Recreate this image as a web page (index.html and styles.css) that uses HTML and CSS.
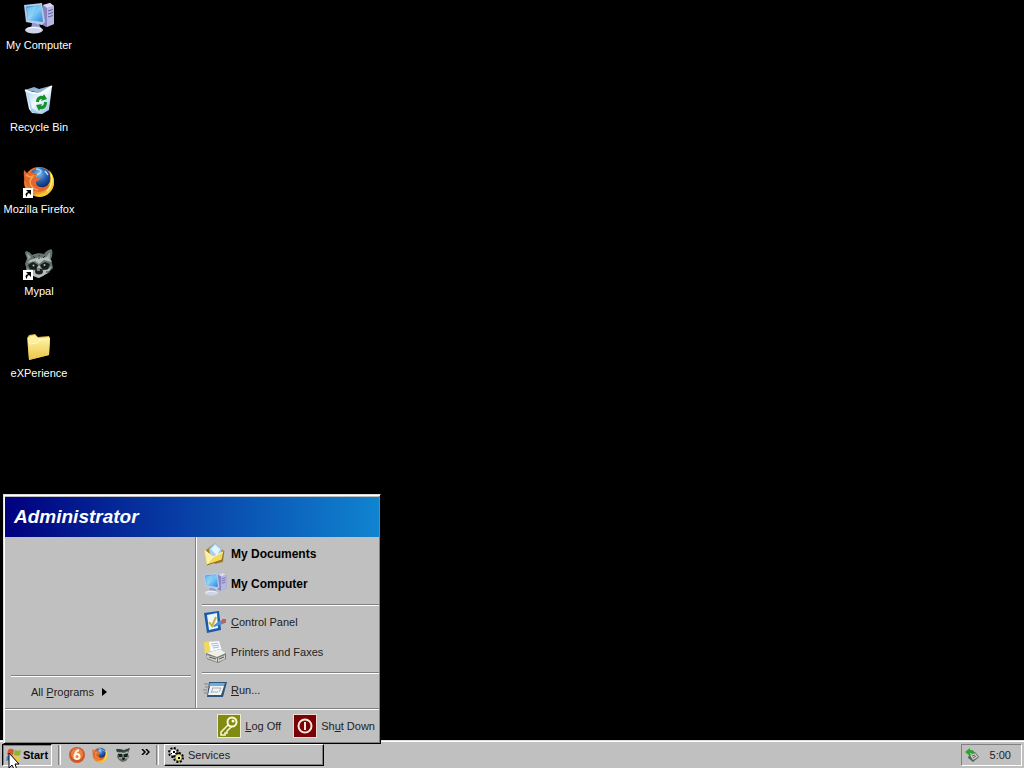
FILE: index.html
```
<!DOCTYPE html>
<html lang="en">
<head>
  <meta charset="utf-8">
  <title>Desktop</title>
  <link rel="stylesheet" href="styles.css">
</head>
<body>
  <!-- shared icons -->
  <svg class="sprites" width="0" height="0" aria-hidden="true">
    <defs>
      <linearGradient id="screen" x1="0" y1="0" x2="1" y2="1">
        <stop offset="0" stop-color="#2f8be0"/><stop offset=".5" stop-color="#7cccf6"/><stop offset="1" stop-color="#2f82d8"/>
      </linearGradient>
      <linearGradient id="bin" x1="0" y1="0" x2="1" y2="1">
        <stop offset="0" stop-color="#9cc9ee"/><stop offset=".5" stop-color="#f3faff"/><stop offset="1" stop-color="#86b6e4"/>
      </linearGradient>
      <linearGradient id="yellow" x1="0" y1="0" x2="0" y2="1">
        <stop offset="0" stop-color="#fff3a2"/><stop offset="1" stop-color="#e9c449"/>
      </linearGradient>
      <radialGradient id="globe" cx=".45" cy=".3" r=".7">
        <stop offset="0" stop-color="#7cc6f2"/><stop offset=".5" stop-color="#2861b4"/><stop offset="1" stop-color="#0e2462"/>
      </radialGradient>
      <linearGradient id="fox" x1="0" y1="0" x2="1" y2="1">
        <stop offset="0" stop-color="#e8672a"/><stop offset=".6" stop-color="#ef8b22"/><stop offset="1" stop-color="#fbd23c"/>
      </linearGradient>
      <symbol id="computer" viewBox="0 0 32 32">
        <path d="M20 3l7-2 4 3v18l-8 3-5-3z" fill="#8785c0"/>
        <path d="M20 3l7-2 4 3-7 2z" fill="#d9d8f3"/>
        <path d="M24 6l7-2v18l-7 3z" fill="#b7b6e2"/>
        <path d="M25 9l5-1.500M25 12l5-1.500M25 15l5-1.500" stroke="#6261a5"/>
        <path d="M9 21l7 1 2 5H8z" fill="#8f9dcb"/>
        <ellipse cx="11" cy="28" rx="9" ry="3.500" fill="#cfd4ea"/>
        <path d="M4 27c3-2 10-2 14 0" stroke="#fff" fill="none"/>
        <path d="M1 3l18-2 3 19-3 3L3 20z" fill="#b9c8e6"/>
        <path d="M3 4.500l15-1.500 2 17-15.500-2z" fill="url(#screen)"/>
        <path d="M4 6l10-2-7 13-2 0z" fill="#a9e0fa" opacity=".5"/>
      </symbol>
      <symbol id="firefox" viewBox="0 0 32 32">
        <circle cx="16" cy="16" r="15" fill="url(#fox)"/>
        <circle cx="17" cy="12" r="10.500" fill="url(#globe)"/>
        <path d="M13 3c4 0 6 2 4 4s-5 1-4 4M22 5l3 4" stroke="#a5dbf5" stroke-width="1.500" fill="none"/>
        <path d="M1 4l4 4c3-2 6-2 9 0l-1 3 5 2-5 3c0 6 8 7 14 2-3 9-14 10-20 4C2 17 0 11 1 4z" fill="#e3672b"/>
        <path d="M3 9l4 2 3-1-3 5c0 5 3 8 8 9" stroke="#f6a052" stroke-width="1.500" fill="none"/>
        <path d="M26 4c6 6 7 16 1 22-4 5-11 6-16 3 9 0 15-4 16-11 1-5 1-9-1-14z" fill="#f8c935"/>
        <path d="M28 8c2 7 0 13-4 17" stroke="#fff08a" stroke-width="1.500" fill="none"/>
      </symbol>
      <symbol id="raccoon" viewBox="0 0 32 32">
        <path d="M2 4c1-2 5 0 7 3 4-2 9-2 12-1 2-3 7-6 8-4 1 3 0 7-1 9l2 9-5 5-6 2-4 3-6-3-5-5-2-6 2-6C3 8 2 6 2 4z" fill="#66726f"/>
        <path d="M4 5l4 4-3 3zM27 4l-4 5 4 2z" fill="#98a4a2"/>
        <path d="M7 12l7-2 2-2 2 2 7-1 4 5-8-2-5 4-4-3-8 2z" fill="#b3bfbb"/>
        <path d="M5 17l5-3 5 3-2 5-6-1zM27 16l-5-2-5 3 3 5 5-1z" fill="#171d1e"/>
        <path d="M3 20l5 3 5-1 3-5 3 5 5 0 5-4-4 7-5 3-4 2-6-2-5-3z" fill="#b4beb9"/>
        <circle cx="10.500" cy="17.500" r="1" fill="#c9c2a0"/><circle cx="21.500" cy="17" r="1" fill="#c9c2a0"/>
        <ellipse cx="16" cy="23.500" rx="4" ry="3" fill="#1c2222"/>
        <path d="M14 22h3" stroke="#d5d9cf"/>
        <path d="M10 8l2 2M16 7v4M22 8l-2 2M5 25l3-1M27 24l-4 0" stroke="#2c3635"/>
      </symbol>
      <symbol id="link" viewBox="0 0 32 32">
        <path d="M0 22h10v10H0z" fill="#fff"/>
        <path d="M3 24h5v5l-2-2c-2 1-2 2-2 4-2-2-2-4 1-5z" fill="#000"/>
      </symbol>
    </defs>
  </svg>

  <main class="desktop">
    <nav class="shortcuts" aria-label="Desktop">
      <a class="shortcut" href="#computer">
        <svg class="icon"><use href="#computer"/></svg>
        <span>My Computer</span>
      </a>
      <a class="shortcut" href="#recycle">
        <svg class="icon" viewBox="0 0 32 32">
          <path d="M2 6l13 3L29 2l-3 24-7 4-10-1-3-4z" fill="url(#bin)"/>
          <path d="M2 6l9-3 5 2 11-3 2 0-11 7z" fill="#8fb4d6"/>
          <path d="M2 6c5 3 10 4 16 3l11-7" stroke="#fff" stroke-width="1.500" fill="none"/>
          <path d="M5 10l3 18 9 2-8-6z" fill="#80b5e9" opacity=".6"/>
          <path d="M13 18c0-5 4-7 7-6l1-2 3 5-6 2 1-2c-2 0-3 1-3 3z" fill="#149229"/>
          <path d="M24 18c0 6-4 8-7 7l-1 2-3-6 6-1-1 2c2 0 3-1 3-4z" fill="#149229"/>
        </svg>
        <span>Recycle Bin</span>
      </a>
      <a class="shortcut" href="#firefox">
        <svg class="icon"><use href="#firefox"/><use href="#link"/></svg>
        <span>Mozilla Firefox</span>
      </a>
      <a class="shortcut" href="#mypal">
        <svg class="icon"><use href="#raccoon"/><use href="#link"/></svg>
        <span>Mypal</span>
      </a>
      <a class="shortcut" href="#experience">
        <svg class="icon" viewBox="0 0 32 32">
          <path d="M4 8l2-3 6-1 3 3 11-1 1 2-1 17-20 5z" fill="#dcb645"/>
          <path d="M5 8l2-2 5-1 3 3 11-1v4L5 14z" fill="#fff0a1"/>
          <path d="M5 13l8-1 3-3 11-1-1 17-20 5z" fill="url(#yellow)"/>
          <path d="M6 14l8-1 3-3 9-1" stroke="#fffbd2" fill="none"/>
        </svg>
        <span>eXPerience</span>
      </a>
    </nav>

    <section class="start-menu" aria-label="Start menu">
      <h1 class="user">Administrator</h1>
      <div class="columns">
        <div class="programs">
          <hr>
          <button class="all-programs" type="button">
            <span>All <u>P</u>rograms</span>
            <svg width="5" height="8" viewBox="0 0 5 8"><path d="M0 0l5 4-5 4z"/></svg>
          </button>
        </div>
        <div class="places">
          <a class="place strong" href="#documents">
            <svg viewBox="0 0 24 24">
              <path d="M3 8l9-7 9 8-1 11-8 2z" fill="#9d8130"/>
              <path d="M6 7l6-6 7 6-3 11-8-2z" fill="#a5d0ef"/>
              <path d="M8 7l4-4 5 4-3 7z" fill="#e4f4ff"/>
              <path d="M1 8l5 3 4 4 11-6-2 9L4 23z" fill="#f2d85c"/>
              <path d="M2 9l8 6-6 7z" fill="#fff0a0"/>
              <path d="M2 9l8 6-6 7M10 15l10-5" stroke="#fff9bd" fill="none"/>
              <path d="M4 23l15-5 2-9" stroke="#8d7024" fill="none"/>
            </svg>
            <span>My Documents</span>
          </a>
          <a class="place strong" href="#computer">
            <svg><use href="#computer"/></svg>
            <span>My Computer</span>
          </a>
          <hr>
          <a class="place" href="#control">
            <svg viewBox="0 0 24 24">
              <path d="M1 3l15-2 2 19-14 3z" fill="#1c5aab"/>
              <path d="M4 5l10-2 1 15-9 2z" fill="#eef6fd"/>
              <path d="M6 12l3 4 4-9" stroke="#c3b33a" stroke-width="2" fill="none"/>
              <path d="M10 16l6-5 5-1 1 3-5 2-6 2z" fill="#4b8ed5"/>
              <path d="M19 9h4v4h-4z" fill="#b76469"/>
            </svg>
            <span><u>C</u>ontrol Panel</span>
          </a>
          <a class="place" href="#printers">
            <svg viewBox="0 0 24 24">
              <path d="M1 2l8-1v10l-7 3z" fill="#f2d957"/>
              <path d="M6 2l10-1 3 10-11 3z" fill="#f8fbff"/>
              <path d="M8 4l7-1M9 6l7-1M10 8l6-1" stroke="#9db9e2"/>
              <path d="M3 13l14-4 6 4v6l-8 4-11-4z" fill="#777"/>
              <path d="M3 13l14-4 6 4-9 4z" fill="#f0f0eb"/>
              <path d="M4 15l10 3v4L4 18zM15 18l7-3v4l-7 3z" fill="#d0d0cc"/>
              <path d="M6 17l7 2M16 19l5-2" stroke="#555"/>
            </svg>
            <span>Printers and Faxes</span>
          </a>
          <hr>
          <a class="place" href="#run">
            <svg viewBox="0 0 24 24">
              <path d="M6 4h18l-4 15H4z" fill="#315577"/>
              <path d="M7 5h15l-1 3H6z" fill="#69aee0"/>
              <path d="M7 8h14l-3 9H5z" fill="#f3f5f5"/>
              <path d="M9 10h9M8 14h7M10 10l-2 5M18 10l-2 4" stroke="#a9adaf"/>
              <path d="M1 6h4M2 9h4M0 12h4M1 15h4" stroke="#788b99"/>
            </svg>
            <span><u>R</u>un...</span>
          </a>
        </div>
      </div>
      <footer class="session">
        <button class="session-button" type="button">
          <svg viewBox="0 0 24 24">
            <path d="M0 0h24v24H0z" fill="#eee9cf"/><path d="M1 1h22v22H1z" fill="#7f8b11"/>
            <path d="M11 11L4 18v3h4v-2h2v-2l4-4z" fill="none" stroke="#fff8d9" stroke-width="1.500"/>
            <circle cx="15" cy="8" r="4.500" fill="#7f8b11" stroke="#fff8d9" stroke-width="2"/>
            <circle cx="16" cy="7" r="1.500" fill="#fff8d9"/>
          </svg>
          <span><u>L</u>og Off</span>
        </button>
        <button class="session-button" type="button">
          <svg viewBox="0 0 24 24">
            <path d="M0 0h24v24H0z" fill="#efdcd0"/><path d="M1 1h22v22H1z" fill="#770306"/>
            <circle cx="12" cy="12" r="6.500" fill="none" stroke="#ffe9df" stroke-width="2"/>
            <path d="M12 8v8" stroke="#ffe9df" stroke-width="2"/>
          </svg>
          <span>Sh<u>u</u>t Down</span>
        </button>
      </footer>
    </section>
  </main>

  <footer class="taskbar">
    <button class="start" type="button">
      <svg width="16" height="16" viewBox="0 0 16 16">
        <path d="M2 3c2-2 4-1 6 0L7 8C5 7 3 7 1 8z" fill="#dd562a"/>
        <path d="M9 3c2 1 4 1 6 0l-1 5c-2 1-4 1-6 0z" fill="#8cb52e"/>
        <path d="M1 9c2-1 4-1 6 0l-1 5c-2-1-4-1-6 0z" fill="#477fd0"/>
        <path d="M8 9c2 1 4 1 6 0l-1 5c-2 1-4 1-6 0z" fill="#f2c835"/>
      </svg>
      <span>Start</span>
    </button>
    <i class="grip"></i>
    <nav class="quick-launch" aria-label="Quick launch">
      <a href="#six" aria-label="Launch 6">
        <svg viewBox="0 0 16 16">
          <circle cx="8" cy="8" r="8" fill="#cf5726"/><circle cx="8" cy="7" r="6" fill="#e98146"/>
          <path d="M10 3C7 4 6 6 6 9" fill="none" stroke="#fff4e6" stroke-width="2"/>
          <circle cx="8" cy="9.500" r="2.500" fill="none" stroke="#fff4e6" stroke-width="2"/>
        </svg>
      </a>
      <a href="#firefox" aria-label="Mozilla Firefox"><svg><use href="#firefox"/></svg></a>
      <a href="#mypal" aria-label="Mypal">
        <svg viewBox="0 0 16 16">
          <path d="M1 3l4 1 5-1 5-2-1 3-1 3 1 3-3 4-4 1-3-2-2-3 1-4z" fill="#5d6b62"/>
          <path d="M1 2h4l4 1 6-2-2 3-6 1-5 0z" fill="#33423a"/>
          <path d="M3 7l4 0v3H4zM9 7l4 0-1 3H9z" fill="#17241e"/>
          <path d="M2 6l5 0 1 1 5-2M4 11l3 0M10 11h3" stroke="#c1cac3" fill="none"/>
          <path d="M7 11h3l-1 2H8z" fill="#0e1511"/>
        </svg>
      </a>
    </nav>
    <button class="more" type="button" aria-label="More">
      <svg width="9" height="6" viewBox="0 0 9 6"><path d="M1 0l3 3-3 3M5 0l3 3-3 3" fill="none" stroke="#000" stroke-width="1.500"/></svg>
    </button>
    <i class="grip"></i>
    <button class="task" type="button">
      <svg width="16" height="16" viewBox="0 0 16 16">
        <circle cx="5.500" cy="5.500" r="4.500" fill="none" stroke="#000" stroke-width="2" stroke-dasharray="2 1.500"/>
        <circle cx="5.500" cy="5.500" r="3.500" fill="#fff" stroke="#000" stroke-width=".5"/>
        <path d="M5 4h2v2H5zM3 6h1v1H3z" fill="#000"/>
        <circle cx="10.500" cy="10.500" r="4.500" fill="none" stroke="#000" stroke-width="2" stroke-dasharray="2 1.500"/>
        <circle cx="10.500" cy="10.500" r="3.500" fill="#f1ef8c" stroke="#000" stroke-width=".5"/>
        <path d="M10 10h2v2h-2z" fill="#000"/>
      </svg>
      <span>Services</span>
    </button>
    <div class="tray">
      <svg width="16" height="16" viewBox="0 0 16 16">
        <path d="M5 8l6-3 4 5-6 5-5-4z" fill="#59635c"/>
        <path d="M6 8l5-2 3 4-5 3z" fill="#c8cfca"/>
        <path d="M8 9l3-1M9 11l3-2" stroke="#666"/>
        <path d="M1 5l5-4v2c4 0 5 2 4 4-1-1-2-1-4-1v3z" fill="#28a82b"/>
      </svg>
      <time>5:00</time>
    </div>
  </footer>

  <svg class="cursor" width="12" height="20" viewBox="0 0 12 20" aria-hidden="true">
    <path d="M1 1v15l3-3 3 6 2-1-2-6h4z" fill="#fff" stroke="#000"/>
  </svg>
</body>
</html>
```
FILE: styles.css
```
* {
  box-sizing: border-box;
}
body {
  margin: 0;
  min-height: 100vh;
  display: flex;
  flex-direction: column;
  background: #000;
  color: #222;
  font-family: "Liberation Sans", Arial, sans-serif;
  font-size: 11px;
  line-height: 14px;
  overflow: hidden;
}
a {
  color: inherit;
  text-decoration: none;
}
button {
  border: 0;
  padding: 0;
  background: none;
  color: inherit;
  font: inherit;
}
svg {
  display: block;
  flex: none;
}
hr {
  border: 0;
  border-top: 1px solid #808080;
  border-bottom: 1px solid #fff;
  margin: 0;
}
.sprites {
  position: absolute;
}

/* desktop */
.desktop {
  flex: 1;
}
.shortcuts {
  display: flex;
  flex-direction: column;
  align-items: flex-start;
  gap: 30px;
  padding-top: 2px;
}
.shortcut {
  width: 78px;
  height: 52px;
  display: flex;
  flex-direction: column;
  align-items: center;
  gap: 4px;
  color: #fff;
  white-space: nowrap;
}
.icon {
  width: 32px;
  height: 32px;
}

/* start menu */
.start-menu {
  position: absolute;
  left: 3px;
  bottom: 24px;
  z-index: 2;
  width: 378px;
  background: #c0c0c0;
  border: 1px solid #dfdfdf;
  border-right-color: #000;
  border-bottom-color: #000;
  box-shadow: inset 1px 1px #fff, inset -1px -1px #808080;
  padding: 2px 1px 1px;
}
.user {
  margin: 0;
  padding: 0 9px;
  background: linear-gradient(to right, #00007f, #1084d0);
  color: #fff;
  font-size: 19px;
  font-style: italic;
  line-height: 40px;
}
.columns {
  display: flex;
}
.programs {
  width: 191px;
  display: flex;
  flex-direction: column;
  justify-content: flex-end;
  padding: 0 4px 1px 6px;
  border-right: 1px solid #808080;
}
.all-programs {
  display: flex;
  align-items: center;
  gap: 8px;
  height: 30px;
  padding-left: 20px;
}
.places {
  flex: 1;
  padding: 2px 0 3px 5px;
  border-left: 1px solid #fff;
}
.place {
  display: flex;
  align-items: center;
  gap: 4px;
  height: 30px;
  padding-left: 1px;
}
.place svg {
  width: 24px;
  height: 24px;
}
.places hr {
  margin: 5px 0 1px;
}
.strong {
  color: #000;
  font-size: 12px;
  font-weight: bold;
}
.session {
  display: flex;
  justify-content: flex-end;
  gap: 12px;
  padding: 5px 4px 4px;
  border-top: 1px solid #808080;
  box-shadow: inset 0 1px #fff;
}
.session-button {
  display: flex;
  align-items: center;
  gap: 4px;
}
.session-button svg {
  width: 24px;
  height: 24px;
}

/* taskbar */
.taskbar {
  height: 28px;
  display: flex;
  align-items: center;
  padding: 2px 2px 1px;
  background: #c0c0c0;
  border-top: 1px solid #dfdfdf;
  box-shadow: inset 0 1px #fff;
}
.start {
  display: flex;
  align-items: center;
  gap: 1px;
  width: 50px;
  height: 22px;
  padding-left: 3px;
  border: 1px solid #000;
  border-right-color: #fff;
  border-bottom-color: #fff;
  box-shadow: inset 1px 1px #808080;
  color: #000;
  font-weight: bold;
}
.grip {
  width: 3px;
  height: 20px;
  margin: 0 6px;
  border-left: 1px solid #808080;
  border-right: 1px solid #fff;
}
.quick-launch {
  display: flex;
  gap: 7px;
  padding-left: 2px;
}
.quick-launch svg {
  width: 16px;
  height: 16px;
}
.more {
  align-self: flex-start;
  padding: 6px 0 0 10px;
}
.task {
  display: flex;
  align-items: center;
  gap: 4px;
  width: 160px;
  height: 22px;
  padding-left: 3px;
  margin-left: -1px;
  border: 1px solid #fff;
  border-right-color: #000;
  border-bottom-color: #000;
  box-shadow: inset -1px -1px #808080;
}
.tray {
  display: flex;
  align-items: center;
  gap: 10px;
  height: 22px;
  margin-left: auto;
  padding: 0 10px 0 2px;
  border: 1px solid #808080;
  border-right-color: #fff;
  border-bottom-color: #fff;
}
.cursor {
  position: absolute;
  left: 8px;
  bottom: -4px;
  z-index: 3;
}
```
